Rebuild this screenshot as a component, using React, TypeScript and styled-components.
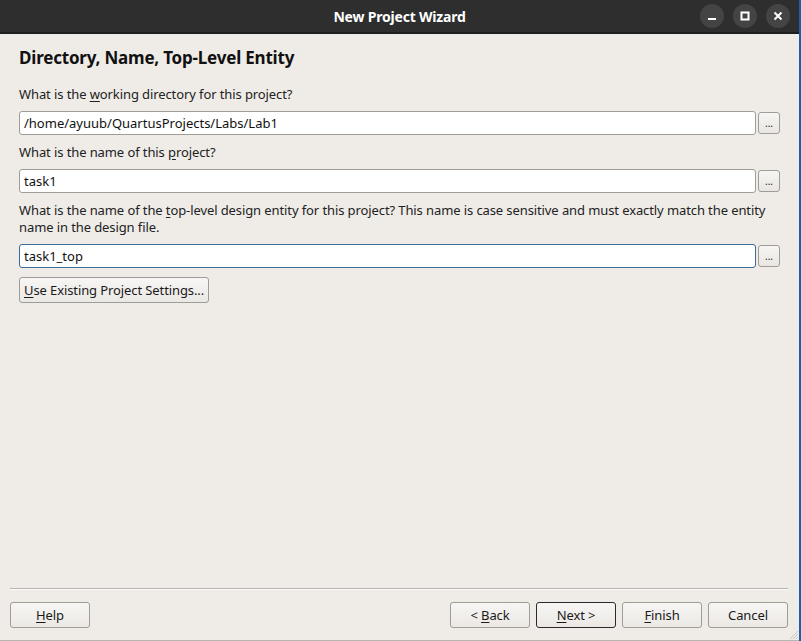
import React from "react";
import styled, { createGlobalStyle } from "styled-components";

const Global = createGlobalStyle`
  html, body { margin: 0; padding: 0; background: #1f5fa8; }
  body { font-family: "Noto Sans", "Open Sans", sans-serif; }
  #root { width: 801px; height: 641px; }
`;

const Desktop = styled.div`
  width: 801px;
  height: 641px;
  background: #1f5fa8;
  display: flex;
  overflow: hidden;
`;

const Window = styled.div`
  width: 799px;
  height: 640px;
  display: flex;
  flex-direction: column;
  background: #efece8;
  border-bottom: 1px solid #b8b6b2;
  position: relative;
`;

const TitleBar = styled.div`
  height: 32px;
  flex: 0 0 32px;
  background: #2e2e2e;
  border-bottom: 2px solid #1e1e1e;
  display: flex;
  align-items: center;
  justify-content: center;
  position: relative;
`;

const Title = styled.div`
  color: #ffffff;
  font-family: "Noto Sans", sans-serif;
  font-weight: 700;
  font-size: 14px;
  letter-spacing: -0.2px;
`;

const WinButtons = styled.div`
  position: absolute;
  right: 9px;
  top: 4px;
  display: flex;
  gap: 9px;
`;

const WinButton = styled.div`
  width: 24px;
  height: 24px;
  border-radius: 50%;
  background: #444444;
  display: flex;
  align-items: center;
  justify-content: center;
`;

const Body = styled.div`
  flex: 1;
  display: flex;
  flex-direction: column;
  padding: 12px 19px 0 19px;
`;

const Heading = styled.h1`
  margin: 0 0 16px 0;
  font-size: 17px;
  font-weight: 700;
  color: #111;
  letter-spacing: -0.2px;
  line-height: 24px;
`;

const Label = styled.div`
  font-size: 13px;
  color: #222;
  line-height: 17px;
  margin-bottom: 8px;
  max-width: 760px;
  letter-spacing: -0.1px;
`;

const Mnemonic = styled.span`
  text-decoration: underline;
  text-underline-offset: 2px;
`;

const Row = styled.div`
  display: flex;
  align-items: center;
  gap: 2px;
  margin-bottom: 9px;
  width: 761px;
`;

const Field = styled.div<{ $focus?: boolean }>`
  flex: 1;
  height: 22px;
  border: 1px solid ${(p) => (p.$focus ? "#3b6a9b" : "#a09c98")};
  border-radius: 3px;
  background: #fff;
  font-size: 13px;
  color: #111;
  display: flex;
  align-items: center;
  padding-left: 4px;
`;

const Browse = styled.div`
  width: 20px;
  height: 20px;
  border: 1px solid #a09c98;
  border-radius: 3px;
  background: linear-gradient(#f7f6f4, #e9e6e2);
  font-size: 10px;
  color: #222;
  display: flex;
  align-items: center;
  justify-content: center;
  line-height: 1;
`;

const PushButton = styled.div<{ $default?: boolean; $w?: number }>`
  height: 26px;
  width: ${(p) => (p.$w ? `${p.$w}px` : "auto")};
  padding: ${(p) => (p.$w ? "0" : "0 4px")};
  box-sizing: border-box;
  border: 1px solid ${(p) => (p.$default ? "#2a2a2a" : "#a09c98")};
  border-radius: 3px;
  background: linear-gradient(#f7f6f4, #ebe8e4);
  font-size: 13px;
  color: #1a1a1a;
  display: inline-flex;
  align-items: center;
  justify-content: center;
  letter-spacing: -0.1px;
  white-space: pre;
`;

const Spacer = styled.div`
  flex: 1;
`;

const Footer = styled.div`
  display: flex;
  flex-direction: column;
  padding: 0 11px 12px 10px;
`;

const Separator = styled.div`
  height: 1px;
  background: #b8b6b2;
  border-bottom: 1px solid #fbfaf9;
  margin-bottom: 12px;
`;

const ButtonRow = styled.div`
  display: flex;
  gap: 6px;
`;

const Grip = styled.svg`
  position: absolute;
  right: 0;
  bottom: 0;
`;

export default function App() {
  return (
    <>
      <Global />
      <Desktop>
        <Window>
          <TitleBar>
            <Title>New Project Wizard</Title>
            <WinButtons>
              <WinButton>
                <svg width="10" height="10" viewBox="0 0 10 10">
                  <rect x="1" y="7" width="8" height="2" fill="#fff" />
                </svg>
              </WinButton>
              <WinButton>
                <svg width="10" height="10" viewBox="0 0 10 10">
                  <rect x="1.5" y="1.5" width="7" height="7" fill="none" stroke="#fff" strokeWidth="2" />
                </svg>
              </WinButton>
              <WinButton>
                <svg width="10" height="10" viewBox="0 0 10 10">
                  <path d="M1.5 1.5 L8.5 8.5 M8.5 1.5 L1.5 8.5" stroke="#fff" strokeWidth="2" />
                </svg>
              </WinButton>
            </WinButtons>
          </TitleBar>
          <Body>
            <Heading>Directory, Name, Top-Level Entity</Heading>
            <Label>
              What is the <Mnemonic>w</Mnemonic>orking directory for this project?
            </Label>
            <Row>
              <Field>/home/ayuub/QuartusProjects/Labs/Lab1</Field>
              <Browse>...</Browse>
            </Row>
            <Label>
              What is the name of this <Mnemonic>p</Mnemonic>roject?
            </Label>
            <Row>
              <Field>task1</Field>
              <Browse>...</Browse>
            </Row>
            <Label>
              What is the name of the <Mnemonic>t</Mnemonic>op-level design entity for this project? This name is case sensitive and must exactly match the entity name in the design file.
            </Label>
            <Row>
              <Field $focus>task1_top</Field>
              <Browse>...</Browse>
            </Row>
            <div>
              <PushButton>
                <span>
                  <Mnemonic>U</Mnemonic>se Existing Project Settings...
                </span>
              </PushButton>
            </div>
            <Spacer />
          </Body>
          <Footer>
            <Separator />
            <ButtonRow>
              <PushButton $w={80}>
                <span>
                  <Mnemonic>H</Mnemonic>elp
                </span>
              </PushButton>
              <Spacer />
              <PushButton $w={80}>
                <span>
                  {"< "}
                  <Mnemonic>B</Mnemonic>ack
                </span>
              </PushButton>
              <PushButton $w={80} $default>
                <span>
                  <Mnemonic>N</Mnemonic>
                  {"ext >"}
                </span>
              </PushButton>
              <PushButton $w={80}>
                <span>
                  <Mnemonic>F</Mnemonic>inish
                </span>
              </PushButton>
              <PushButton $w={80}>Cancel</PushButton>
            </ButtonRow>
          </Footer>
          <Grip width="12" height="12" viewBox="0 0 12 12">
            <path d="M11 3 L3 11 M11 6 L6 11 M11 9 L9 11" stroke="#c8c5c1" strokeWidth="1" />
          </Grip>
        </Window>
      </Desktop>
    </>
  );
}
